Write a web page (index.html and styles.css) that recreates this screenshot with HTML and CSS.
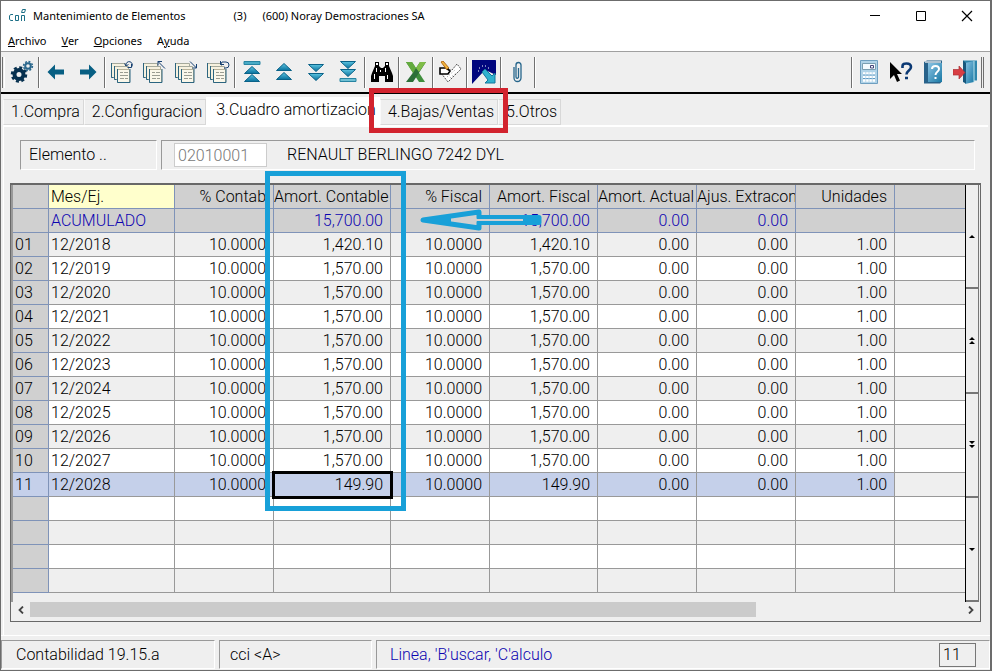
FILE: index.html
```html
<!DOCTYPE html>
<html lang="es">
<head>
<meta charset="utf-8">
<title>Mantenimiento de Elementos</title>
<link rel="stylesheet" href="styles.css">
</head>
<body>
<div class="window">
  <header class="titlebar">
    <svg class="logo" width="20" height="20" viewBox="0 0 20 20" fill="none" stroke="#1c6f86"><path d="M6 8.500H3.500L2.500 10v3L3.500 14.500H6M8.500 9.500h3v5h-3zM14.500 15V9.500h3V15M15.500 3.500h3l-1 3h-3z"/></svg>
    <h1>Mantenimiento de Elementos</h1>
    <span class="count">(3)</span>
    <span class="company">(600) Noray Demostraciones SA</span>
    <div class="winbtns">
      <button aria-label="Minimizar"><svg width="12" height="12" stroke="#000" fill="none"><path d="M1 5.500h10"/></svg></button>
      <button aria-label="Maximizar"><svg width="12" height="12" stroke="#000" fill="none"><path d="M1.500 1.500h9v9h-9z"/></svg></button>
      <button aria-label="Cerrar"><svg width="12" height="12" stroke="#000" fill="none" stroke-width="1.200"><path d="M1 1l10 10M11 1L1 11"/></svg></button>
    </div>
  </header>
  <nav class="menu">
    <button><u>A</u>rchivo</button>
    <button><u>V</u>er</button>
    <button><u>O</u>pciones</button>
    <button>A<u>y</u>uda</button>
  </nav>
  <svg class="defs" width="0" height="0">
    <defs>
      <linearGradient id="teal" x1="0" y1="0" x2="0" y2="1"><stop offset="0" stop-color="#5cc4e0"/><stop offset="1" stop-color="#08709c"/></linearGradient>
      <linearGradient id="blue" x1="0" y1="0" x2="1" y2="1"><stop offset="0" stop-color="#8cc4e4"/><stop offset="1" stop-color="#1878a4"/></linearGradient>
      <symbol id="pages" viewBox="0 0 24 24">
        <g fill="#f6f1df" stroke="#a5a99c"><path d="M1.500 3.500h14v14h-14z"/><path d="M4.500 6.500h14v13h-14z"/></g>
        <path d="M1.500 3v14.500h2M4.500 6v13.500h2" fill="none" stroke="#2b6580"/>
        <path d="M7.500 9.500h12v13h-12z" fill="#faf7ea" stroke="#b8b29a"/>
        <path d="M7.500 9v13.500h12.500V9" fill="none" stroke="#2b6580"/>
        <path d="M10 12.500h3M14 12.500h4M10 15.500h8M10 18.500h4M15 18.500h3" stroke="#9a9c92"/>
      </symbol>
      <symbol id="up" viewBox="0 0 16 8"><path d="M8 .5L15.500 7.500H.5z" fill="url(#teal)" stroke="#0a6288"/></symbol>
      <symbol id="down" viewBox="0 0 16 8"><path d="M.5 .5h15L8 7.500z" fill="url(#teal)" stroke="#0a6288"/></symbol>
    </defs>
  </svg>
  <div class="toolbar" role="toolbar" aria-label="Herramientas">
    <i class="sep grip"></i>
    <button aria-label="Procesos"><svg width="24" height="24" viewBox="0 0 24 24" fill="none" stroke="#06304f"><circle cx="9" cy="14.500" r="4.500" stroke-width="4"/><circle cx="9" cy="14.500" r="7" stroke-width="2.500" stroke-dasharray="3 2.500"/><g stroke="#2a678c"><circle cx="18" cy="6" r="2.800" stroke-width="2"/><circle cx="18" cy="6" r="4.400" stroke-width="1.600" stroke-dasharray="1.900 1.550"/></g></svg></button>
    <i class="sep"></i>
    <button aria-label="Anterior"><svg width="18" height="16" viewBox="0 0 18 16"><path d="M.5 8L8 .5V5.500h9v5H8v5z" fill="#075f83"/></svg></button>
    <button aria-label="Siguiente"><svg width="18" height="16" viewBox="0 0 18 16"><path d="M17.500 8L10 .5V5.500H1v5h9v5z" fill="#075f83"/></svg></button>
    <i class="sep"></i>
    <button aria-label="Registro actual"><svg width="24" height="24"><use href="#pages"/><path d="M16 5.500a3.200 3.200 0 1 1 5.500 1.500M14.500 3.500l1.500 2.500 2.500-1.500M17.500 7.500h4V4" fill="none" stroke="#153f70"/></svg></button>
    <button aria-label="Primer registro"><svg width="24" height="24"><use href="#pages"/><path d="M23 8.500L16 1.500M16 5.500V1.500h4" fill="none" stroke="#153f70"/></svg></button>
    <button aria-label="Ultimo registro"><svg width="24" height="24"><use href="#pages"/><path d="M16 1.500l6.500 6.500M22.500 4v4h-4" fill="none" stroke="#153f70"/></svg></button>
    <button aria-label="Recargar"><svg width="24" height="24"><use href="#pages"/><path d="M14.500 4.500L16 2h4a3 3 0 0 1 0 6h-2M14.500 1v3.500H18" fill="none" stroke="#153f70"/></svg></button>
    <i class="sep"></i>
    <button aria-label="Inicio"><svg width="18" height="24"><path d="M1 1.500h16v3H1z" fill="#49abc6" stroke="#2784a2"/><use href="#up" x="1" y="6" width="16" height="8"/><use href="#up" x="1" y="14" width="16" height="8"/></svg></button>
    <button aria-label="Pagina anterior"><svg width="18" height="24"><use href="#up" x="1" y="3" width="16" height="8"/><use href="#up" x="1" y="12" width="16" height="8"/></svg></button>
    <button aria-label="Pagina siguiente"><svg width="18" height="24"><use href="#down" x="1" y="4" width="16" height="8"/><use href="#down" x="1" y="13" width="16" height="8"/></svg></button>
    <button aria-label="Final"><svg width="18" height="24"><use href="#down" x="1" y="1" width="16" height="8"/><use href="#down" x="1" y="9" width="16" height="8"/><path d="M1 18.500h16v3H1z" fill="#6fc0d4" stroke="#2784a2"/></svg></button>
    <i class="sep"></i>
    <button aria-label="Buscar"><svg width="24" height="22" viewBox="0 0 24 22"><path d="M5 1h4v4l2 2h2l2-2V1h4v4l3 7 1 3v6h-8v-6h-6v6H1v-6l1-3 3-7z"/><path d="M6 2h2v2H6zM16 2h2v2h-2zM6 7h1v4H6zM15 7h1v4h-1zM4 13h1v5H4zM17 14h1v4h-1zM10 9h1v2h-1z" fill="#fff"/></svg></button>
    <i class="sep"></i>
    <button aria-label="Excel"><svg width="22" height="22" viewBox="0 0 22 22"><path d="M1 1h6l13 20h-6z" fill="#3e8e3c"/><path d="M15 1h6L8 21H1l6-8z" fill="#2c6f38"/><path d="M15 1h6l-7 10-3-4z" fill="#80bd48"/><path d="M1 1h6l4 6-3 5z" fill="#63aa3e"/></svg></button>
    <i class="sep"></i>
    <button aria-label="Notas"><svg width="24" height="22" viewBox="0 0 24 22"><path d="M3 12l3-3 8 0 5-6 4 5L10 21z" fill="#fff" stroke="#555" stroke-dasharray="2 1"/><path d="M9 16l8-7M12 17l6-5" stroke="#999" stroke-dasharray="1 2"/><path d="M2 7h7l3 3-2 3H2z" fill="#fff" stroke="#000" stroke-width="1.600"/><path d="M3 1l2-1 6 7-2 2z" fill="#f2b63d" stroke="#b56b1a"/><path d="M9 9l3 1-2-3z"/></svg></button>
    <i class="sep"></i>
    <button aria-label="Enlace"><svg width="26" height="26" viewBox="0 0 26 26"><path d="M1 1h24L13 12 1 25z" fill="#00067e"/><path d="M25 1v15L10 9z" fill="#00067e"/><path d="M8 9h1M11 7h1M14 7h1M7 12h1M17 9h1" stroke="#fff"/><path d="M11 13l3-3 7 7 3-3v10H14l3-3z" fill="#30b2cf" stroke="#13779c"/></svg></button>
    <i class="sep"></i>
    <button aria-label="Adjuntos"><svg width="12" height="24" viewBox="0 0 12 24" fill="none" stroke="#25658b" stroke-width="1.300"><path d="M2 7v11a3.500 3.500 0 0 0 7 0V5a2.500 2.500 0 0 0-5 0v12a1.200 1.200 0 0 0 2.500 0V8"/></svg></button>
    <i class="sep"></i>
    <span class="spacer"></span>
    <i class="sep"></i>
    <button aria-label="Calculadora"><svg width="20" height="24" viewBox="0 0 20 24"><path d="M1.500.5h17v23h-17z" fill="#b0d3e8" stroke="#6f9fc0"/><path d="M3.500 3.500h13v6h-13z" fill="#f4fbff" stroke="#7a9fb2"/><path d="M11.500 5.500h3v2.500h-3z" fill="none" stroke="#447"/><path d="M4 13.500h12M4 17h12M4 20.500h12" stroke="#fff" stroke-width="2.500" stroke-dasharray="2.400 .8"/><path d="M4 15h12M4 18.500h12" stroke="#5f9ac4" stroke-dasharray="2.400 .8"/></svg></button>
    <button aria-label="Ayuda contextual"><svg width="24" height="24" viewBox="0 0 24 24"><path d="M1 2v17l4-4 3 7 3-1.500L8 14h5z"/><path d="M13.500 8V6C13.500 4 15.500 3.500 17.500 3.500c3 0 4.500 1.500 4.500 3.500 0 3.500-4.500 3.500-4.500 7.500M16 18h3" fill="none" stroke="#0b3974" stroke-width="2.600"/></svg></button>
    <button aria-label="Manual"><svg width="20" height="24" viewBox="0 0 20 24"><path d="M1 2l3-1.500h15v21l-2 2H1z" fill="#28628a"/><path d="M5 3h14v19H5z" fill="url(#blue)"/><path d="M2 2h16" stroke="#dbe3e7" stroke-width="1.500"/><path d="M9 9c0-4 7-4 7 0 0 3-3.500 2.500-3.500 6M12.500 17v2" fill="none" stroke="#fff" stroke-width="2"/></svg></button>
    <button aria-label="Salir"><svg width="24" height="24" viewBox="0 0 24 24"><path d="M10 .5h14v20H10z" fill="#2f86ac"/><path d="M12 3l9-2v21l-9 2z" fill="url(#blue)"/><path d="M10 .5V22l3 1.500V3z" fill="#17577c"/><path d="M21 1v21" stroke="#b9e2ec"/><path d="M0 9.500h6V6l6 6.500-6 6.500v-4H0z" fill="#d83e43" stroke="#a93136" stroke-width=".7"/></svg></button>
    <i class="sep double"></i>
  </div>
  <div class="tabs" role="tablist">
    <button role="tab">1.Compra</button>
    <button role="tab">2.Configuracion</button>
    <button role="tab" class="active" aria-selected="true">3.Cuadro amortizacion</button>
    <button role="tab">4.Bajas/Ventas</button>
    <button role="tab">5.Otros</button>
  </div>
  <main class="panel">
    <div class="fields">
      <label class="box name" for="elemento">Elemento ..</label>
      <div class="box value"><input id="elemento" type="text" value="02010001"><span>RENAULT BERLINGO 7242 DYL</span></div>
    </div>
    <section class="grid">
      <div class="gridtop">
        <table>
          <colgroup><col class="c-num"><col class="c-mes"><col class="c-std"><col class="c-cont"><col class="c-std"><col class="c-fis"><col class="c-std"><col class="c-std"><col class="c-std"><col></colgroup>
          <thead>
            <tr><th></th><th class="key">Mes/Ej.</th><th>% Contab</th><th class="cut">Amort. Contable</th><th>% Fiscal</th><th>Amort. Fiscal</th><th class="cut">Amort. Actual</th><th class="cut">Ajus. Extracon</th><th>Unidades</th><th></th></tr>
            <tr class="total"><td></td><td>ACUMULADO</td><td></td><td>15,700.00</td><td></td><td>15,700.00</td><td>0.00</td><td>0.00</td><td></td><td></td></tr>
          </thead>
          <tbody>
            <tr><th>01</th><td>12/2018</td><td>10.0000</td><td>1,420.10</td><td>10.0000</td><td>1,420.10</td><td>0.00</td><td>0.00</td><td>1.00</td><td></td></tr>
            <tr><th>02</th><td>12/2019</td><td>10.0000</td><td>1,570.00</td><td>10.0000</td><td>1,570.00</td><td>0.00</td><td>0.00</td><td>1.00</td><td></td></tr>
            <tr><th>03</th><td>12/2020</td><td>10.0000</td><td>1,570.00</td><td>10.0000</td><td>1,570.00</td><td>0.00</td><td>0.00</td><td>1.00</td><td></td></tr>
            <tr><th>04</th><td>12/2021</td><td>10.0000</td><td>1,570.00</td><td>10.0000</td><td>1,570.00</td><td>0.00</td><td>0.00</td><td>1.00</td><td></td></tr>
            <tr><th>05</th><td>12/2022</td><td>10.0000</td><td>1,570.00</td><td>10.0000</td><td>1,570.00</td><td>0.00</td><td>0.00</td><td>1.00</td><td></td></tr>
            <tr><th>06</th><td>12/2023</td><td>10.0000</td><td>1,570.00</td><td>10.0000</td><td>1,570.00</td><td>0.00</td><td>0.00</td><td>1.00</td><td></td></tr>
            <tr><th>07</th><td>12/2024</td><td>10.0000</td><td>1,570.00</td><td>10.0000</td><td>1,570.00</td><td>0.00</td><td>0.00</td><td>1.00</td><td></td></tr>
            <tr><th>08</th><td>12/2025</td><td>10.0000</td><td>1,570.00</td><td>10.0000</td><td>1,570.00</td><td>0.00</td><td>0.00</td><td>1.00</td><td></td></tr>
            <tr><th>09</th><td>12/2026</td><td>10.0000</td><td>1,570.00</td><td>10.0000</td><td>1,570.00</td><td>0.00</td><td>0.00</td><td>1.00</td><td></td></tr>
            <tr><th>10</th><td>12/2027</td><td>10.0000</td><td>1,570.00</td><td>10.0000</td><td>1,570.00</td><td>0.00</td><td>0.00</td><td>1.00</td><td></td></tr>
            <tr class="selected"><th>11</th><td>12/2028</td><td>10.0000</td><td class="cursor">149.90</td><td>10.0000</td><td>149.90</td><td>0.00</td><td>0.00</td><td>1.00</td><td></td></tr>
            <tr><th></th><td></td><td></td><td></td><td></td><td></td><td></td><td></td><td></td><td></td></tr>
            <tr><th></th><td></td><td></td><td></td><td></td><td></td><td></td><td></td><td></td><td></td></tr>
            <tr><th></th><td></td><td></td><td></td><td></td><td></td><td></td><td></td><td></td><td></td></tr>
            <tr><th></th><td></td><td></td><td></td><td></td><td></td><td></td><td></td><td></td><td></td></tr>
          </tbody>
        </table>
        <div class="vscroll">
          <button aria-label="Fila anterior"><svg width="6" height="8"><path d="M0 6l3-3 3 3z"/></svg></button>
          <button aria-label="Pagina arriba"><svg width="6" height="8"><path d="M0 4l3-3 3 3zM0 8l3-3 3 3z"/></svg></button>
          <button aria-label="Pagina abajo"><svg width="6" height="8"><path d="M0 0h6L3 3zM0 4h6L3 7z"/></svg></button>
          <button aria-label="Fila siguiente"><svg width="6" height="8"><path d="M0 3h6L3 6z"/></svg></button>
        </div>
      </div>
      <div class="hscroll">
        <button aria-label="Izquierda"><svg width="8" height="8" fill="none" stroke="#444" stroke-width="1.800"><path d="M6 .5L2.500 4 6 7.500"/></svg></button>
        <div class="track"><div class="thumb"></div></div>
        <button aria-label="Derecha"><svg width="8" height="8" fill="none" stroke="#444" stroke-width="1.800"><path d="M2 .5L5.500 4 2 7.500"/></svg></button>
      </div>
    </section>
  </main>
  <footer class="status">
    <div class="version">Contabilidad 19.15.a</div>
    <div class="user">cci &lt;A&gt;</div>
    <div class="hint"><span>Linea, 'B'uscar, 'C'alculo</span><output>11</output></div>
  </footer>
  <div class="mark mark-tab"></div>
  <div class="mark mark-column"></div>
  <svg class="mark-arrow" width="124" height="24" viewBox="0 0 124 24"><path d="M4 12L60 4v5.500h60v5H60V20z" fill="none" stroke="#18a0d8" stroke-width="5" stroke-linejoin="round"/><path d="M60 12h60" stroke="#18a0d8" stroke-width="8"/><path d="M56 12h48" stroke="#d0d0d0" stroke-width="2"/><path d="M4 12l28-4v8z" fill="#18a0d8"/></svg>
</div>
</body>
</html>
```
FILE: styles.css
```css
* { box-sizing: border-box; }
body { margin: 0; background: #efefef; }
button { border: 0; padding: 0; background: none; font: inherit; color: inherit; }
svg { display: block; }
.window {
  position: relative;
  display: flex;
  flex-direction: column;
  min-height: 100vh;
  border: 1px solid #6c6c6c;
  border-right-width: 2px;
  background: #efefef;
  color: #000;
  font: 300 16px/20px Roboto, "Liberation Sans", sans-serif;
}
.defs { position: absolute; }

.titlebar {
  display: flex;
  align-items: center;
  height: 30px;
  padding-left: 6px;
  background: #fff;
  font: 400 11px/16px "Noto Sans", sans-serif;
}
.titlebar h1 { margin: 0 48px 0 6px; font: inherit; }
.titlebar .company { margin-left: 16px; }
.winbtns { display: flex; margin-left: auto; }
.winbtns button { display: grid; place-items: center; width: 46px; height: 30px; }
.menu {
  display: flex;
  gap: 15px;
  height: 21px;
  padding-left: 7px;
  border-bottom: 1px solid #a0a0a0;
  background: #fff;
  font: 400 11px/20px "Noto Sans", sans-serif;
}

.toolbar {
  display: flex;
  align-items: center;
  height: 42px;
  padding-right: 6px;
  border-bottom: 2px solid #000;
}
.toolbar button { display: grid; place-items: center; width: 32px; height: 32px; }
.sep { width: 2px; height: 31px; border-left: 1px solid #707070; border-right: 1px solid #fff; }
.grip { width: 3px; margin: 0 1px; }
.double { width: 3px; border-right-color: #707070; }
.spacer { flex: 1; }

.tabs { display: flex; align-items: flex-end; height: 31px; padding: 3px 0 0 2px; }
.tabs button {
  height: 26px;
  padding: 0 3px 0 7px;
  border: 1px solid #d8d8d8;
  border-left-color: #fafafa;
  white-space: nowrap;
}
.tabs .active { height: 28px; padding: 0 3px 2px 9px; border-color: #fff; background: #fff; }

.panel { flex: 1; margin: 0 2px; padding: 13px 7px 13px 6px; border-top: 2px solid #fff; border-left: 1px solid #fff; }
.fields { display: flex; gap: 4px; padding: 0 6px 0 10px; }
.box { display: flex; align-items: center; height: 30px; border: 1px solid #fff; border-top-color: #999; border-left-color: #999; }
.name { width: 137px; padding-left: 8px; }
.value { flex: 1; gap: 20px; padding-left: 12px; }
.value input {
  width: 93px;
  height: 24px;
  padding: 0 3px;
  border: 1px solid #ccc;
  background: #fff;
  color: #777;
  font: inherit;
}

.grid { margin-top: 13px; border: 1px solid #686868; border-top-width: 2px; }
.gridtop { display: flex; padding-right: 1px; border-left: 2px solid #999; }
table { flex: 1; width: 0; table-layout: fixed; border-collapse: separate; border-spacing: 0; align-self: flex-start; }
.c-num { width: 36px; }
.c-mes { width: 126px; }
.c-std { width: 99px; }
.c-cont { width: 117px; }
.c-fis { width: 108px; }
th, td {
  height: 24px;
  padding: 0 7px 0 2px;
  border-right: 1px solid #999;
  border-bottom: 1px solid #999;
  font-weight: 300;
  line-height: 23px;
  text-align: right;
  white-space: nowrap;
  overflow: hidden;
}
th:last-child, td:last-child { border-right: 0; }
tr > :nth-child(1), tr > :nth-child(2) { text-align: left; }
thead th, thead td, tbody th { background: #d0d0d0; border-color: #7f93b8; }
thead .key { background: #ffc; }
.cut { padding: 0 2px 0 0; text-align: left; }
.total td { color: #0c04b0; }
tbody tr:nth-child(even) td { background: #fff; }
tbody .selected th, tbody .selected td:not(:last-child) { background: #c5d0ea; }
.selected .cursor { outline: 3px solid #000; outline-offset: -1px; }

.vscroll { display: flex; flex-direction: column; width: 14px; height: 417px; border-left: 1px solid #000; }
.vscroll button { flex: 1; display: grid; place-items: center; border-right: 1px solid #777; border-bottom: 2px solid #777; }
.hscroll { display: flex; height: 19px; padding-bottom: 3px; }
.hscroll button { display: grid; place-items: center; width: 19px; }
.track { flex: 1; }
.thumb { width: 78%; height: 15px; background: #cbcbcb; }

.status { display: flex; gap: 4px; height: 35px; padding: 4px 0 1px; border-top: 1px solid #fff; }
.status div { display: flex; align-items: center; border: 1px solid #fff; border-top-color: #999; border-left-color: #999; }
.version { width: 214px; padding-left: 14px; }
.user { width: 153px; padding-left: 10px; }
.hint { flex: 1; justify-content: space-between; padding: 0 13px; color: #0c04b0; }
output { width: 37px; height: 24px; padding-left: 3px; border: 1px solid #777; color: #000; line-height: 22px; }

.mark { position: absolute; border: 5px solid #18a0d8; pointer-events: none; }
.mark-tab { left: 368px; top: 87px; width: 139px; height: 45px; border-color: #d2232e; }
.mark-column { left: 264px; top: 170px; width: 141px; height: 340px; }
.mark-arrow { position: absolute; left: 418px; top: 207px; }
```
